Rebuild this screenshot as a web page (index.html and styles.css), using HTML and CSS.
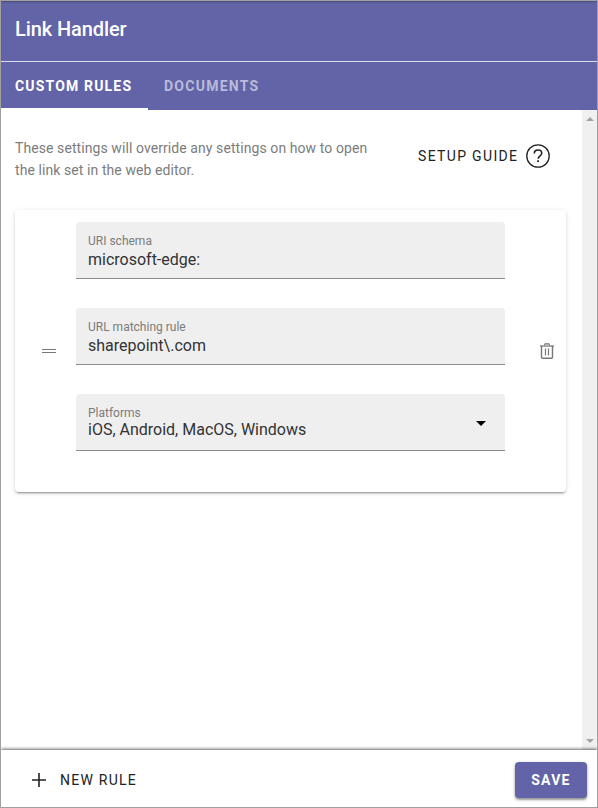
FILE: index.html
```html
<!DOCTYPE html>
<html lang="en">
<head>
<meta charset="utf-8">
<title>Link Handler</title>
<link rel="stylesheet" href="styles.css">
</head>
<body>
<div class="window">
  <header class="header"><h1 class="title">Link Handler</h1></header>
  <nav class="tabs">
    <a class="tab tab-active">CUSTOM RULES</a>
    <a class="tab">DOCUMENTS</a>
  </nav>
  <div class="body">
    <main class="content">
      <div class="intro">
        <p class="intro-text">These settings will override any settings on how to open the link set in the web editor.</p>
        <a class="guide"><span>SETUP GUIDE</span>
          <svg width="24" height="24" viewBox="0 0 24 24" fill="none" stroke="#222" stroke-width="1.3"><circle cx="12" cy="12" r="11.2"/><path d="M8.3 9.4C8.3 7.2 9.8 6 12 6s3.7 1.2 3.7 3.2c0 2.4-3.5 2.8-3.5 5.5" stroke-width="1.6"/><path d="M12.1 16.2v1.8" stroke-width="1.8"/></svg>
        </a>
      </div>
      <section class="card">
        <div class="handle"><svg width="14" height="4" viewBox="0 0 14 4" stroke="#777"><path d="M0 .5h14M0 3.5h14"/></svg></div>
        <div class="fields">
          <div class="field"><span class="label">URI schema</span><span class="value">microsoft-edge:</span></div>
          <div class="field"><span class="label">URL matching rule</span><span class="value">sharepoint\.com</span></div>
          <div class="field select"><span class="label">Platforms</span><span class="value">iOS, Android, MacOS, Windows</span>
            <svg class="caret" width="10" height="5" viewBox="0 0 10 5"><path d="M0 0h10L5 5z"/></svg>
          </div>
        </div>
        <div class="remove"><svg width="14" height="16" viewBox="0 0 14 16" fill="none" stroke="#777"><path d="M0 3h14" stroke-width="1.3"/><path d="M4.5 2.5V1.3q0-.6.6-.6h3.8q.6 0 .6.6v1.2" fill="#bbb"/><path d="M1.5 3v11.3q0 1 1 1h9q1 0 1-1V3" stroke-width="1.4"/><path d="M5.5 5.5v7M8.5 5.5v7" stroke-width="1.2"/></svg></div>
      </section>
    </main>
    <div class="scrollbar">
      <svg width="8" height="4" viewBox="0 0 8 4" fill="#a3a3a3"><path d="M0 4l4-4 4 4z"/></svg>
      <svg width="8" height="4" viewBox="0 0 8 4" fill="#a3a3a3"><path d="M0 0l4 4 4-4z"/></svg>
    </div>
  </div>
  <footer class="footer">
    <a class="new-rule"><svg width="14" height="14" viewBox="0 0 14 14" stroke="#222" stroke-width="1.6"><path d="M0 7h14M7 0v14"/></svg><span>NEW RULE</span></a>
    <button class="save">SAVE</button>
  </footer>
</div>
</body>
</html>
```
FILE: styles.css
```css
* { box-sizing: border-box; }
body { margin: 0; font-family: Roboto, "Liberation Sans", sans-serif; }
.window {
  display: flex;
  flex-direction: column;
  width: 598px;
  height: 808px;
  border: 1px solid #a0a0a0;
  background: #fff;
  overflow: hidden;
}
.header {
  height: 61px;
  flex: none;
  padding: 12px 14px 0;
  background: #6264a7;
  border-bottom: 1px solid #dcdcea;
  box-shadow: inset 0 2px 2px -1px rgba(0, 0, 0, .25);
}
.title { margin: 0; font-size: 20px; line-height: 32px; font-weight: 500; letter-spacing: -.1px; color: #fff; }
.tabs { display: flex; flex: none; height: 48px; background: #6264a7; }
.tab {
  padding: 0 16px 0 14px;
  line-height: 48px;
  font-size: 14px;
  font-weight: 700;
  letter-spacing: 1.25px;
  color: #b9bada;
}
.tab-active { width: 147px; padding-right: 0; letter-spacing: 1.17px; color: #fff; border-bottom: 2px solid #fff; }
.tab:last-child { padding-left: 16px; }
.body { display: flex; flex: 1; min-height: 0; }
.content { flex: 1; padding: 27px 16px 0 14px; }
.intro { display: flex; align-items: flex-start; height: 73px; }
.intro-text { width: 370px; margin: 0; font-size: 14px; line-height: 22px; letter-spacing: .08px; color: #7c7c7c; }
.guide {
  display: flex;
  align-items: center;
  gap: 8px;
  margin: 7px 0 0 33px;
  font-size: 14px;
  letter-spacing: 1.33px;
  color: #222;
  white-space: nowrap;
}
.card {
  display: flex;
  height: 282px;
  border-radius: 4px;
  box-shadow: 0 3px 1px -2px rgba(0, 0, 0, .2), 0 2px 2px 0 rgba(0, 0, 0, .14), 0 1px 5px 0 rgba(0, 0, 0, .12);
}
.handle { width: 61px; padding: 139px 0 0 27px; }
.handle svg, .remove svg { display: block; }
.fields { display: flex; flex-direction: column; gap: 29px; width: 429px; padding-top: 12px; }
.field {
  display: flex;
  flex-direction: column;
  height: 57px;
  padding: 11px 12px 0;
  background: #efefef;
  border-bottom: 1px solid #8c8c8c;
  border-radius: 4px 4px 0 0;
}
.label { font-size: 12px; line-height: 16px; letter-spacing: 0; color: #7c7c7c; }
.value { margin-top: 1px; font-size: 16px; line-height: 20px; letter-spacing: 0; color: #333; }
.select { position: relative; }
.select .value { margin-top: -1px; }
.caret { position: absolute; right: 19px; top: 27px; }
.remove { padding: 133px 0 0 35px; }
.scrollbar {
  display: flex;
  flex-direction: column;
  justify-content: space-between;
  align-items: center;
  width: 15px;
  padding: 7px 0;
  background: #f0f0f0;
}
.footer {
  position: relative;
  display: flex;
  justify-content: space-between;
  align-items: center;
  flex: none;
  height: 57px;
  padding: 3px 10px 0 31px;
  background: #fff;
  box-shadow: 0 -1px 3px rgba(0, 0, 0, .6);
}
.new-rule { display: flex; align-items: center; gap: 14px; font-size: 14px; letter-spacing: 1.25px; color: #222; }
.save {
  width: 72px;
  height: 36px;
  padding: 0;
  border: 0;
  border-radius: 4px;
  background: #6264a7;
  color: #fff;
  font: 700 14px Roboto, sans-serif;
  letter-spacing: 1.25px;
  box-shadow: 0 2px 2px rgba(0, 0, 0, .3), 0 1px 4px rgba(0, 0, 0, .2);
}
```
